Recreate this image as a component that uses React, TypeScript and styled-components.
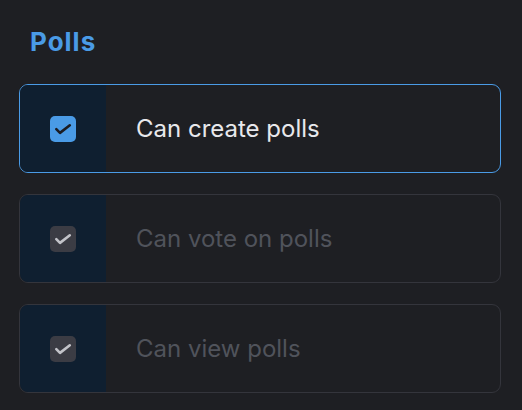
import React from "react";
import styled, { createGlobalStyle } from "styled-components";

const Global = createGlobalStyle`
  html, body { margin: 0; padding: 0; background: #1e1f23; }
  body { font-family: Inter, "Noto Sans", sans-serif; }
`;

const Page = styled.div`
  width: 522px;
  height: 410px;
  box-sizing: border-box;
  padding: 26px 21px 0 19px;
  background: #1e1f23;
`;

const Title = styled.h2`
  margin: 0 0 0 11px;
  font-size: 26px;
  line-height: 32px;
  font-weight: 700;
  letter-spacing: 1px;
  color: #4a9be6;
`;

const List = styled.div`
  display: flex;
  flex-direction: column;
  gap: 21px;
  margin-top: 26px;
`;

const Card = styled.label<{ $active: boolean }>`
  display: flex;
  height: 89px;
  box-sizing: border-box;
  border: 1px solid ${(p) => (p.$active ? "#4a9be6" : "#34353c")};
  border-radius: 9px;
  overflow: hidden;
  background: #1e1f23;
`;

const Side = styled.div`
  width: 86px;
  flex: none;
  display: flex;
  align-items: center;
  justify-content: center;
  background: #0f1f30;
`;

const Box = styled.span<{ $active: boolean }>`
  width: 26px;
  height: 26px;
  border-radius: 5px;
  display: flex;
  align-items: center;
  justify-content: center;
  background: ${(p) => (p.$active ? "#4a9be6" : "#3b3c44")};
  color: ${(p) => (p.$active ? "#1b1c22" : "#c2c3c9")};
`;

const Label = styled.span<{ $active: boolean }>`
  display: flex;
  align-items: center;
  padding-left: 30px;
  font-size: 24px;
  color: ${(p) => (p.$active ? "#e8e8ec" : "#50535b")};
`;

const Check = () => (
  <svg width="26" height="26" viewBox="0 0 26 26" fill="none">
    <path
      d="M6.3 13.2 L10 16.9 L19.8 9.3"
      stroke="currentColor"
      strokeWidth="2.6"
      strokeLinecap="round"
      strokeLinejoin="round"
    />
  </svg>
);

const items = [
  { label: "Can create polls", active: true },
  { label: "Can vote on polls", active: false },
  { label: "Can view polls", active: false },
];

export default function App() {
  return (
    <Page>
      <Global />
      <Title>Polls</Title>
      <List>
        {items.map((it) => (
          <Card key={it.label} $active={it.active}>
            <Side>
              <Box $active={it.active}>
                <Check />
              </Box>
            </Side>
            <Label $active={it.active}>{it.label}</Label>
          </Card>
        ))}
      </List>
    </Page>
  );
}
